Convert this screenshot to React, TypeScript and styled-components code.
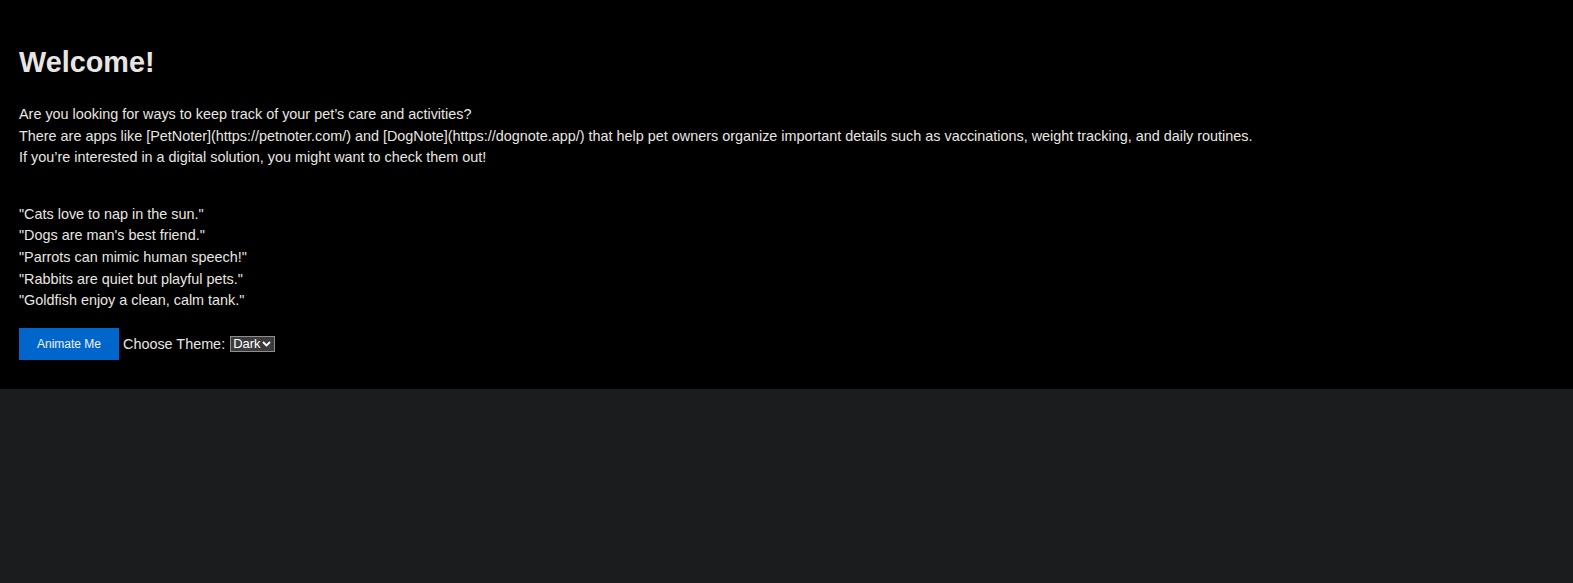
import React, { useState } from "react";
import styled, { createGlobalStyle } from "styled-components";

const GlobalStyle = createGlobalStyle`
  html, body {
    margin: 0;
    padding: 0;
    background: #1b1c1e;
  }
  body {
    font-family: "Liberation Sans", Arial, sans-serif;
    color: #e8e6e3;
  }
`;

const Page = styled.main`
  background: #000000;
  padding: 45px 19px 29px;
  display: flex;
  flex-direction: column;
  align-items: flex-start;
  font-size: 14.4px;
  line-height: 21.6px;
`;

const Title = styled.h1`
  margin: 0 0 24.5px;
  font-size: 28.8px;
  line-height: 34.56px;
  font-weight: 700;
  color: #e8e6e3;
`;

const Paragraph = styled.p<{ $gapAfter: number }>`
  margin: 0 0 ${(p) => p.$gapAfter}px;
  color: #e8e6e3;
`;

const Line = styled.span`
  display: block;
  white-space: nowrap;
`;

const Controls = styled.div`
  display: flex;
  align-items: center;
  gap: 4px;
`;

const AnimateButton = styled.button`
  width: 100px;
  height: 32px;
  border: none;
  border-radius: 0;
  background: #0066cc;
  color: #f2f2f2;
  font-family: "Liberation Sans", Arial, sans-serif;
  font-size: 12px;
  padding: 0;
  cursor: pointer;
`;

const Label = styled.label`
  display: flex;
  align-items: center;
  gap: 5px;
  font-size: 14.4px;
  color: #e8e6e3;
`;

const SelectWrap = styled.span`
  position: relative;
  display: inline-flex;
  align-items: center;
  height: 16px;
  width: 45px;
  box-sizing: border-box;
  border: 1px solid #8e8e8e;
  background: #3b3b3b;
`;

const ThemeSelect = styled.select`
  appearance: none;
  -webkit-appearance: none;
  height: 14px;
  width: 100%;
  padding: 0 0 0 2px;
  margin: 0;
  border: none;
  border-radius: 0;
  background: transparent;
  color: #ffffff;
  font-family: "Liberation Sans", Arial, sans-serif;
  font-size: 13px;
  line-height: 14px;
  outline: none;
  color-scheme: dark;
`;

const Chevron = styled.svg`
  position: absolute;
  right: 3px;
  top: 4px;
  width: 9px;
  height: 6px;
  pointer-events: none;
`;

const intro = [
  "Are you looking for ways to keep track of your pet’s care and activities?",
  "There are apps like [PetNoter](https://petnoter.com/) and [DogNote](https://dognote.app/) that help pet owners organize important details such as vaccinations, weight tracking, and daily routines.",
  "If you’re interested in a digital solution, you might want to check them out!",
];

const quotes = [
  '"Cats love to nap in the sun."',
  "\"Dogs are man's best friend.\"",
  '"Parrots can mimic human speech!"',
  '"Rabbits are quiet but playful pets."',
  '"Goldfish enjoy a clean, calm tank."',
];

export default function App() {
  const [theme, setTheme] = useState("dark");
  return (
    <>
      <GlobalStyle />
      <Page>
        <Title>Welcome!</Title>
        <Paragraph $gapAfter={35}>
          {intro.map((t) => (
            <Line key={t}>{t}</Line>
          ))}
        </Paragraph>
        <Paragraph $gapAfter={16.5}>
          {quotes.map((t) => (
            <Line key={t}>{t}</Line>
          ))}
        </Paragraph>
        <Controls>
          <AnimateButton>Animate Me</AnimateButton>
          <Label>
            Choose Theme:
            <SelectWrap>
              <ThemeSelect value={theme} onChange={(e) => setTheme(e.target.value)}>
                <option value="dark">Dark</option>
                <option value="light">Light</option>
              </ThemeSelect>
              <Chevron viewBox="0 0 9 6">
                <path d="M1 1 L4.5 4.5 L8 1" fill="none" stroke="#ffffff" strokeWidth="1.8" />
              </Chevron>
            </SelectWrap>
          </Label>
        </Controls>
      </Page>
    </>
  );
}
